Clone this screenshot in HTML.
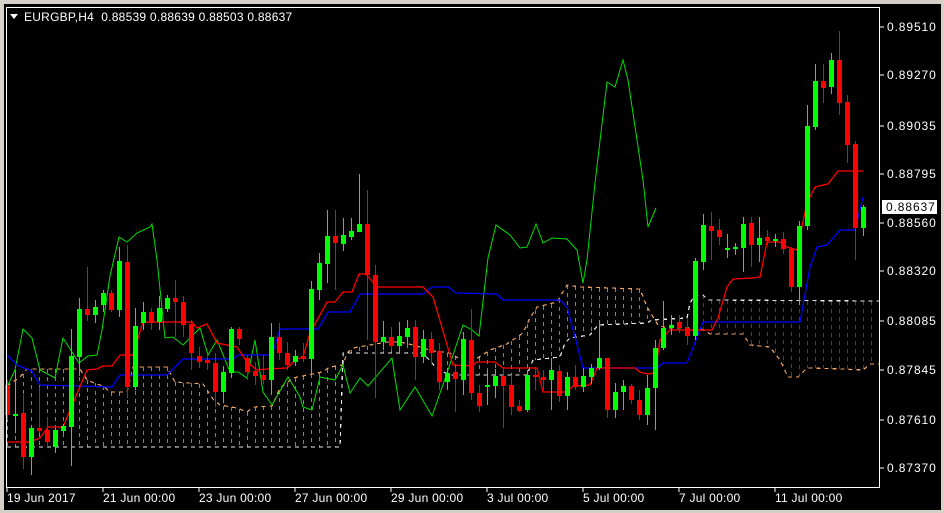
<!DOCTYPE html>
<html><head><meta charset="utf-8"><style>
html,body{margin:0;padding:0;background:#d4d0c8;}
#w{position:relative;width:944px;height:513px;overflow:hidden;background:#d4d0c8;}
svg{position:absolute;left:0;top:0;}
text{font-family:"Liberation Sans",sans-serif;font-size:12px;letter-spacing:0.25px;fill:#fff;}
.p{letter-spacing:0.9px;}
</style></head><body><div id="w">
<svg id="s" width="944" height="513" xmlns="http://www.w3.org/2000/svg">
<rect x="4" y="4" width="937" height="506" fill="#000"/>
<g id="cloud" shape-rendering="crispEdges"></g><g id="lines"></g><g id="candles" shape-rendering="crispEdges"></g>
<rect x="6.5" y="7.5" width="873" height="480" fill="none" stroke="#fff" stroke-width="1" shape-rendering="crispEdges"/>
<polygon points="10,14 18,14 14,19" fill="#fff"/>
<text x="24" y="21">EURGBP,H4 &#160;0.88539 0.88639 0.88503 0.88637</text>
<g stroke="#fff" shape-rendering="crispEdges">
<line x1="880" y1="27" x2="884" y2="27"/><line x1="880" y1="75" x2="884" y2="75"/><line x1="880" y1="126" x2="884" y2="126"/><line x1="880" y1="174" x2="884" y2="174"/><line x1="880" y1="223" x2="884" y2="223"/><line x1="880" y1="271" x2="884" y2="271"/><line x1="880" y1="321" x2="884" y2="321"/><line x1="880" y1="370" x2="884" y2="370"/><line x1="880" y1="420" x2="884" y2="420"/><line x1="880" y1="468" x2="884" y2="468"/>
<line x1="7" y1="488" x2="7" y2="492"/><line x1="103" y1="488" x2="103" y2="492"/><line x1="199" y1="488" x2="199" y2="492"/><line x1="295" y1="488" x2="295" y2="492"/><line x1="391" y1="488" x2="391" y2="492"/><line x1="487" y1="488" x2="487" y2="492"/><line x1="583" y1="488" x2="583" y2="492"/><line x1="679" y1="488" x2="679" y2="492"/><line x1="775" y1="488" x2="775" y2="492"/>
</g>
<g class="p">
<text class="p" x="887" y="31">0.89510</text><text class="p" x="887" y="79">0.89270</text><text class="p" x="887" y="130">0.89035</text><text class="p" x="887" y="178">0.88795</text><text class="p" x="887" y="227">0.88560</text><text class="p" x="887" y="275">0.88320</text><text class="p" x="887" y="325">0.88085</text><text class="p" x="887" y="374">0.87845</text><text class="p" x="887" y="424">0.87610</text><text class="p" x="887" y="472">0.87370</text>
</g>
<rect x="882" y="200" width="55" height="14" fill="#fff"/>
<text class="p" x="886" y="211" style="fill:#000">0.88637</text>
<text x="7" y="502">19 Jun 2017</text><text x="103" y="502">21 Jun 00:00</text><text x="199" y="502">23 Jun 00:00</text><text x="295" y="502">27 Jun 00:00</text><text x="391" y="502">29 Jun 00:00</text><text x="487" y="502">3 Jul 00:00</text><text x="583" y="502">5 Jul 00:00</text><text x="679" y="502">7 Jul 00:00</text><text x="775" y="502">11 Jul 00:00</text>
</svg>
<script>
var NS="http://www.w3.org/2000/svg";
function el(p,t,a){var e=document.createElementNS(NS,t);for(var k in a)e.setAttribute(k,a[k]);p.appendChild(e);return e;}
function pts(a){return a.map(function(p){return p[0]+","+p[1]}).join(" ");}
function interp(a,x){if(x<=a[0][0])return a[0][1];for(var i=1;i<a.length;i++){if(x<=a[i][0]){var t=(x-a[i-1][0])/(a[i][0]-a[i-1][0]);return a[i-1][1]+t*(a[i][1]-a[i-1][1]);}}return a[a.length-1][1];}
var A=[[7,386],[20,377],[27,369],[80,369],[87,380],[97,384],[103,386],[110,392],[127,392],[133,367],[167,367],[175,382],[203,384],[213,399],[220,405],[237,408],[247,412],[253,407],[272,406],[280,388],[293,378],[322,372],[330,367],[343,365],[347,353],[353,348],[387,342],[400,342],[413,345],[433,351],[450,353],[458,358],[473,361],[490,350],[507,344],[523,333],[530,318],[537,307],[557,302],[567,285],[580,287],[640,289],[647,307],[658,325],[667,328],[687,328],[697,327],[707,332],[710,334],[743,334],[750,345],[770,347],[780,360],[788,377],[798,377],[807,368],[843,369],[863,370],[870,364],[879,364]];
var B=[[7,447],[340,447],[343,353],[423,353],[432,363],[437,369],[450,375],[527,375],[533,360],[560,357],[565,343],[570,338],[590,335],[598,325],[647,323],[652,320],[687,318],[690,303],[695,295],[703,295],[708,300],[879,301]];
var cg=document.getElementById("cloud");
for(var x=7;x<=879;x+=8){var a=Math.round(interp(A,x)),b=Math.round(interp(B,x));el(cg,"line",{x1:x+0.5,x2:x+0.5,y1:Math.min(a,b),y2:Math.max(a,b),stroke:(a<b?"#00e000":"#e00000"),"stroke-width":1,"stroke-dasharray":"4,4"});}
el(cg,"polyline",{points:pts(A),fill:"none",stroke:"#f4a460","stroke-width":1.2,"stroke-dasharray":"4,4"});
el(cg,"polyline",{points:pts(B),fill:"none",stroke:"#e8e8e8","stroke-width":1.2,"stroke-dasharray":"4,4"});
var lg=document.getElementById("lines");
var R=[[7,442],[30,442],[40,438],[48,427],[63,427],[87,370],[97,369],[103,366],[112,366],[120,355],[133,355],[143,322],[192,322],[197,328],[207,324],[217,343],[237,347],[247,362],[257,370],[267,369],[287,368],[297,359],[303,357],[310,333],[327,302],[335,302],[343,292],[352,292],[359,274],[366,274],[377,287],[423,287],[433,297],[453,365],[472,366],[477,362],[495,362],[503,368],[537,368],[543,392],[567,392],[573,386],[590,385],[597,368],[635,368],[640,372],[647,374],[655,373],[660,340],[670,330],[700,330],[712,330],[718,318],[727,287],[733,279],[753,278],[760,277],[767,242],[780,242],[787,247],[797,250],[807,203],[815,187],[828,184],[838,171],[863,171]];
var BL=[[7,355],[17,365],[32,371],[40,385],[112,387],[120,375],[167,375],[183,359],[233,359],[238,355],[272,355],[280,329],[318,329],[328,312],[350,312],[360,294],[423,294],[432,287],[448,287],[456,293],[497,294],[503,300],[560,300],[567,307],[575,337],[583,368],[657,368],[663,363],[687,363],[703,322],[800,322],[810,267],[817,247],[827,245],[840,230],[855,230],[863,197]];
var G=[[7,387],[15,370],[23,329],[32,338],[40,370],[55,378],[63,338],[72,352],[79,363],[88,356],[97,355],[102,330],[110,276],[119,237],[127,242],[137,233],[150,227],[152,224],[157,260],[165,338],[173,337],[183,345],[200,328],[208,355],[217,340],[230,372],[238,372],[247,378],[255,340],[263,392],[272,405],[288,377],[300,397],[303,407],[312,410],[320,377],[335,380],[343,365],[350,393],[360,378],[368,386],[392,358],[400,410],[415,387],[432,416],[447,373],[463,325],[472,330],[479,336],[488,258],[496,225],[510,235],[520,248],[527,247],[536,224],[543,243],[552,238],[567,239],[577,250],[583,283],[587,260],[595,183],[607,82],[615,87],[623,60],[628,80],[643,180],[648,227],[656,208]];
el(lg,"polyline",{points:pts(G),fill:"none",stroke:"#00e000","stroke-width":1});
el(lg,"polyline",{points:pts(BL),fill:"none",stroke:"#0000ff","stroke-width":1.3});
el(lg,"polyline",{points:pts(R),fill:"none",stroke:"#ff0000","stroke-width":1.3});
var C=[[385,415,380,420],[415,414,370,433],[413,457,395,469],[457,428,425,475],[428,431,387,433],[430,442,417,447],[447,430,428,453],[431,426,424,433],[427,356,329,466],[357,309,298,376],[309,315,267,321],[315,307,300,323],[305,293,290,312],[293,310,290,312],[310,261,247,317],[262,387,245,398],[387,326,308,390],[323,312,302,330],[312,323,308,330],[322,308,296,330],[309,298,295,312],[298,302,280,337],[302,325,296,337],[324,353,320,370],[356,362,347,368],[360,363,355,370],[363,392,353,407],[392,372,366,403],[373,329,327,378],[329,339,327,345],[358,372,355,380],[371,376,362,385],[375,380,355,384],[380,337,323,395],[337,353,323,360],[353,365,342,370],[362,356,350,366],
[356,359,343,362],[359,289,281,375],[290,263,253,300],[264,236,210,283],[236,243,210,290],[244,235,218,251],[237,231,218,240],[232,224,174,232],[224,275,190,340],[275,342,265,398],[342,337,321,350],[337,346,327,350],[346,336,322,354],[337,328,320,345],[327,357,320,380],[357,339,330,363],[339,353,332,362],[351,382,343,390],[382,373,368,390],[372,379,367,412],[380,339,332,395],[340,393,309,400],[393,406,385,412],[386,385,370,405],[386,376,369,398],[376,386,368,428],[385,407,375,415],[406,411,400,412],[410,375,370,412],[375,377,367,390],[377,380,370,390],[380,370,358,410],[371,396,365,402],[396,377,372,410],[377,387,365,390],[387,376,368,392],
[377,368,364,384],[368,358,320,370],[358,410,358,418],[410,392,383,418],[392,386,380,410],[386,400,384,404],[400,415,390,420],[415,388,375,425],[388,348,340,430],[348,328,301,350],[328,325,315,335],[322,328,315,333],[328,336,320,345],[336,261,258,340],[262,225,214,270],[226,231,212,260],[230,237,219,245],[250,248,234,258],[248,247,243,255],[248,224,217,272],[223,245,217,267],[245,238,217,262],[237,241,230,245],[240,239,234,247],[239,249,232,254],[249,287,247,292],[287,226,221,305],[226,126,105,230],[127,81,64,130],[81,88,64,103],[87,60,53,94],[60,103,31,115],[102,145,95,163],[144,228,141,260],[228,207,205,236]];
var kg=document.getElementById("candles");
C.forEach(function(c,i){var x=7+8*i,o=c[0],cl=c[1],up=cl<o,col=up?"#00ff00":"#ff0000";
el(kg,"line",{x1:x+0.5,x2:x+0.5,y1:c[2],y2:c[3],stroke:col,"stroke-width":1});
var t=Math.min(o,cl),h=Math.max(2,Math.abs(o-cl));el(kg,"rect",{x:x-2,y:t,width:5,height:h,fill:col});});
</script>
</div></body></html>
